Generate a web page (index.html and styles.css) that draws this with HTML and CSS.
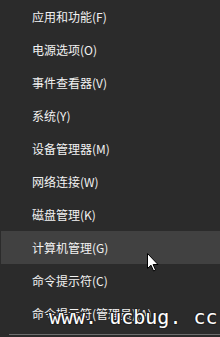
FILE: index.html
```html
<!DOCTYPE html>
<html lang="zh-CN">
<head>
<meta charset="utf-8">
<link rel="stylesheet" href="styles.css">
</head>
<body>
<div class="menu">
  <ul class="list">
    <li class="item">应用和功能(F)</li>
    <li class="item">电源选项(O)</li>
    <li class="item">事件查看器(V)</li>
    <li class="item">系统(Y)</li>
    <li class="item">设备管理器(M)</li>
    <li class="item">网络连接(W)</li>
    <li class="item">磁盘管理(K)</li>
    <li class="item hover">计算机管理(G)</li>
    <li class="item">命令提示符(C)</li>
    <li class="item">命令提示符(管理员)(A)</li>
  </ul>
  <div class="sep"></div>
  <svg class="cursor" width="12" height="19" viewBox="0 0 12 19">
    <path d="M0.5 0.5 L0.5 15.5 L4 12.2 L6.6 18 L8.6 17.1 L6.1 11.5 L11 11.5 Z" fill="#ffffff" stroke="#000000" stroke-width="1"/>
  </svg>
  <div class="watermark">www. ucbug. cc</div>
</div>
</body>
</html>
```
FILE: styles.css
```css
html, body {
  margin: 0;
  padding: 0;
  background: #2b2b2b;
}
.menu {
  position: relative;
  width: 220px;
  height: 337px;
  overflow: hidden;
  background: #2b2b2b;
  font-family: "Noto Sans CJK SC", "Liberation Sans", sans-serif;
}
.list {
  list-style: none;
  margin: 0 0 0 1px;
  padding: 0;
}
.item {
  height: 33px;
  line-height: 33px;
  padding-left: 31px;
  font-size: 12px;
  color: #f2f2f2;
  white-space: nowrap;
}
.item.hover {
  background: #414141;
}
.sep {
  margin: 4px 0 0 9px;
  height: 1px;
  background: #6e6e6e;
}
.cursor {
  position: absolute;
  left: 147px;
  top: 253px;
}
.watermark {
  position: absolute;
  left: 49px;
  top: 305px;
  font-family: "DejaVu Sans Mono", "Liberation Mono", monospace;
  font-size: 20px;
  line-height: 24px;
  color: #ffffff;
  white-space: pre;
  text-shadow: 1px 1px 0 #222, -1px -1px 0 #222, 1px -1px 0 #222, -1px 1px 0 #222, 0 1px 0 #222, 1px 0 0 #222, 0 -1px 0 #222, -1px 0 0 #222;
}
```
